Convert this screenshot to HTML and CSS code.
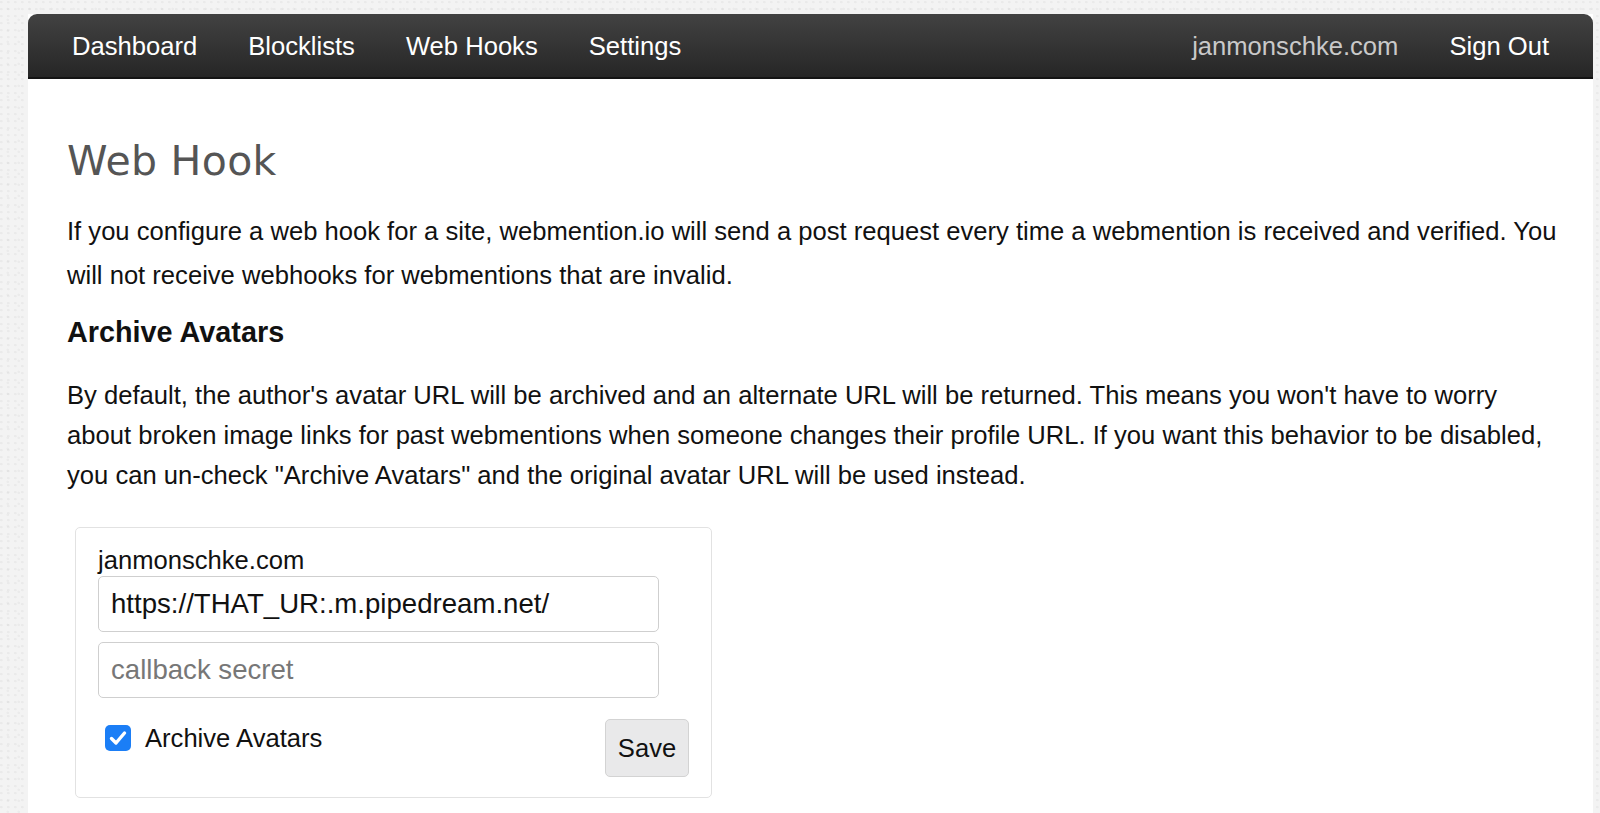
FILE: index.html
```html
<!DOCTYPE html>
<html lang="en">
<head>
<meta charset="utf-8">
<title>Web Hook</title>
<link rel="stylesheet" href="styles.css">
</head>
<body>
<div class="page">
  <nav class="navbar">
    <ul class="nav nav-left">
      <li><a href="#">Dashboard</a></li>
      <li><a href="#">Blocklists</a></li>
      <li><a href="#">Web Hooks</a></li>
      <li><a href="#">Settings</a></li>
    </ul>
    <ul class="nav nav-right">
      <li><span class="nav-domain">janmonschke.com</span></li>
      <li><a href="#">Sign Out</a></li>
    </ul>
  </nav>
  <main class="content">
    <h1 class="title">Web Hook</h1>
    <p class="text text-intro">If you configure a web hook for a site, webmention.io will send a post request every time a webmention is received and verified. You will not receive webhooks for webmentions that are invalid.</p>
    <h4 class="subtitle">Archive Avatars</h4>
    <p class="text">By default, the author's avatar URL will be archived and an alternate URL will be returned. This means you won't have to worry about broken image links for past webmentions when someone changes their profile URL. If you want this behavior to be disabled, you can un-check "Archive Avatars" and the original avatar URL will be used instead.</p>
    <form class="card">
      <div class="card-label">janmonschke.com</div>
      <input class="field" type="text" value="https://THAT_UR:.m.pipedream.net/">
      <input class="field" type="text" placeholder="callback secret">
      <div class="card-row">
        <label class="check-label">
          <span class="checkbox">
            <svg viewBox="0 0 26 26" width="26" height="26"><path d="M6.5 13.5 L11 18 L19.5 8" fill="none" stroke="#fff" stroke-width="3.4" stroke-linecap="round" stroke-linejoin="round"/></svg>
          </span>
          Archive Avatars
        </label>
        <button class="btn" type="button">Save</button>
      </div>
    </form>
  </main>
</div>
</body>
</html>
```
FILE: styles.css
```css
html, body {
  margin: 0;
  padding: 0;
}
body {
  background-color: #f3f3f3;
  background-image:
    radial-gradient(circle at 20% 30%, rgba(0,0,0,0.035) 1px, transparent 1.5px),
    radial-gradient(circle at 70% 80%, rgba(0,0,0,0.03) 1px, transparent 1.5px);
  background-size: 7px 7px, 11px 11px;
  font-family: "Liberation Sans", Arial, Helvetica, sans-serif;
  color: #111;
  height: 813px;
  overflow: hidden;
}
.page {
  margin: 14px 7px 0 28px;
  background: #fff;
  min-height: 799px;
}
.navbar {
  height: 63px;
  display: flex;
  justify-content: space-between;
  align-items: center;
  padding: 0 44px;
  border-radius: 9px 9px 0 0;
  background: linear-gradient(#424242, #262626);
  border-bottom: 2px solid #141414;
}
.nav {
  list-style: none;
  margin: 0;
  padding: 0;
  display: flex;
  gap: 51px;
  font-size: 25.6px;
  line-height: 40px;
}
.nav a {
  color: #fff;
  text-decoration: none;
}
.nav-domain {
  color: #c9c9c9;
}
.content {
  padding: 0 30px 0 39px;
}
.title {
  margin: 57px 0 0;
  font-family: "DejaVu Sans", Verdana, sans-serif;
  font-weight: normal;
  font-size: 41px;
  line-height: 50px;
  color: #555;
  letter-spacing: 0.3px;
}
.text {
  margin: 0;
  font-size: 25.6px;
  line-height: 40px;
}
.text-intro {
  margin-top: 23px;
  line-height: 44px;
}
.subtitle {
  margin: 15px 0 23px;
  font-size: 28.8px;
  line-height: 40px;
  font-weight: bold;
}
.card {
  margin: 32px 0 0 8px;
  width: 591px;
  padding: 16px 22px 20px 22px;
  border: 1px solid #e2e2e2;
  border-radius: 5px;
  display: flex;
  flex-direction: column;
}
.card-label {
  font-size: 25.6px;
  line-height: 32px;
}
.field {
  box-sizing: border-box;
  width: 561px;
  height: 56px;
  margin: 0;
  padding: 0 12px;
  border: 1px solid #cfcfcf;
  border-radius: 5px;
  font-family: "Liberation Sans", Arial, sans-serif;
  font-size: 27.6px;
  color: #111;
  background: #fff;
}
.field + .field {
  margin-top: 10px;
}
.field::placeholder {
  color: #777;
}
.card-row {
  margin-top: 20px;
  display: flex;
  justify-content: space-between;
  align-items: flex-start;
}
.check-label {
  display: flex;
  align-items: center;
  gap: 14px;
  font-size: 25.6px;
  line-height: 40px;
  padding-left: 7px;
}
.checkbox {
  width: 26px;
  height: 26px;
  border-radius: 5px;
  background: #1b7ef6;
  display: flex;
}
.btn {
  margin-top: 1px;
  width: 84px;
  height: 58px;
  padding: 0;
  border: 1px solid #d3d3d3;
  border-radius: 5px;
  background: #e9e9ea;
  font-family: "Liberation Sans", Arial, sans-serif;
  font-size: 25.6px;
  color: #111;
}
```
